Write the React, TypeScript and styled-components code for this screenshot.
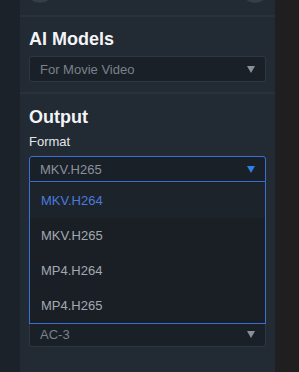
import React from "react";
import styled, { createGlobalStyle } from "styled-components";

const Global = createGlobalStyle`
  html, body { margin: 0; padding: 0; background: #1e1e1e; }
  body { font-family: "Liberation Sans", Arial, sans-serif; overflow: hidden; }
`;

const Page = styled.div`
  display: flex;
  height: 372px;
  width: 299px;
`;

const LeftStrip = styled.div`
  width: 20px;
  background: #1b222a;
`;

const RightStrip = styled.div`
  flex: 1;
  background: #1f1f1f;
`;

const Panel = styled.div`
  width: 255px;
  background: #222a34;
  display: flex;
  flex-direction: column;
`;

const Header = styled.div`
  height: 15px;
  overflow: hidden;
  display: flex;
  justify-content: space-between;
  padding: 0 6px;
  border-bottom: 2px solid #28313c;
`;

const Knob = styled.div`
  width: 28px;
  height: 28px;
  border-radius: 50%;
  background: #343d48;
  margin-top: -25px;
`;

const Section = styled.div<{ $divider?: boolean; $top: number }>`
  padding: ${(p) => p.$top}px 9px 10px 9px;
  display: flex;
  flex-direction: column;
  border-bottom: ${(p) => (p.$divider ? "2px solid #28313c" : "none")};
`;

const Title = styled.div`
  font-size: 18px;
  line-height: 22px;
  font-weight: bold;
  color: #f2f4f6;
  margin-bottom: 6px;
`;

const Fields = styled.div`
  display: flex;
  flex-direction: column;
  gap: 7px;
`;

const Field = styled.div`
  display: flex;
  flex-direction: column;
  gap: 6px;
  position: relative;
`;

const Label = styled.div`
  font-size: 13px;
  line-height: 16px;
  color: #e4e6e9;
`;

const SelectBox = styled.div<{ $open?: boolean }>`
  height: 26px;
  box-sizing: border-box;
  border: 1px solid ${(p) => (p.$open ? "#3b6fd6" : "#2f3842")};
  border-radius: ${(p) => (p.$open ? "3px 3px 0 0" : "3px")};
  background: #1a2028;
  display: flex;
  align-items: center;
  justify-content: space-between;
  padding: 0 10px 0 10px;
  font-size: 13px;
  color: ${(p) => (p.$open ? "#8a929b" : "#7b828a")};
`;

const Arrow = styled.span<{ $open?: boolean }>`
  width: 0;
  height: 0;
  border-left: 4px solid transparent;
  border-right: 4px solid transparent;
  border-top: 7px solid ${(p) => (p.$open ? "#2f7fe6" : "#8a9098")};
`;

const Menu = styled.div`
  position: absolute;
  left: 0;
  right: 0;
  top: 48px;
  z-index: 5;
  padding-top: 1px;
  background: #1a1f26;
  border: 1px solid #3b6fd6;
  border-top: none;
  box-sizing: border-box;
`;

const Item = styled.div<{ $active?: boolean }>`
  height: 35px;
  display: flex;
  align-items: center;
  padding-left: 11px;
  font-size: 13px;
  color: ${(p) => (p.$active ? "#4a7bdc" : "#a2a9b1")};
  background: ${(p) => (p.$active ? "#1d232b" : "transparent")};
`;

const formats = ["MKV.H264", "MKV.H265", "MP4.H264", "MP4.H265"];

export default function App() {
  return (
    <>
      <Global />
      <Page>
        <LeftStrip />
        <Panel>
          <Header>
            <Knob />
            <Knob />
          </Header>
          <Section $divider $top={11}>
            <Title>AI Models</Title>
            <SelectBox>
              <span>For Movie Video</span>
              <Arrow />
            </SelectBox>
          </Section>
          <Section $top={12}>
            <Title>Output</Title>
            <Fields>
              <Field>
                <Label>Format</Label>
                <SelectBox $open>
                  <span>MKV.H265</span>
                  <Arrow $open />
                </SelectBox>
                <Menu>
                  {formats.map((f, i) => (
                    <Item key={f} $active={i === 0}>
                      {f}
                    </Item>
                  ))}
                </Menu>
              </Field>
              <Field>
                <Label>Resolution</Label>
                <SelectBox>
                  <span>Original</span>
                  <Arrow />
                </SelectBox>
              </Field>
              <Field>
                <Label>Frame Rate</Label>
                <SelectBox>
                  <span>Original</span>
                  <Arrow />
                </SelectBox>
              </Field>
              <Field>
                <Label>Audio</Label>
                <SelectBox>
                  <span>AC-3</span>
                  <Arrow />
                </SelectBox>
              </Field>
            </Fields>
          </Section>
        </Panel>
        <RightStrip />
      </Page>
    </>
  );
}
